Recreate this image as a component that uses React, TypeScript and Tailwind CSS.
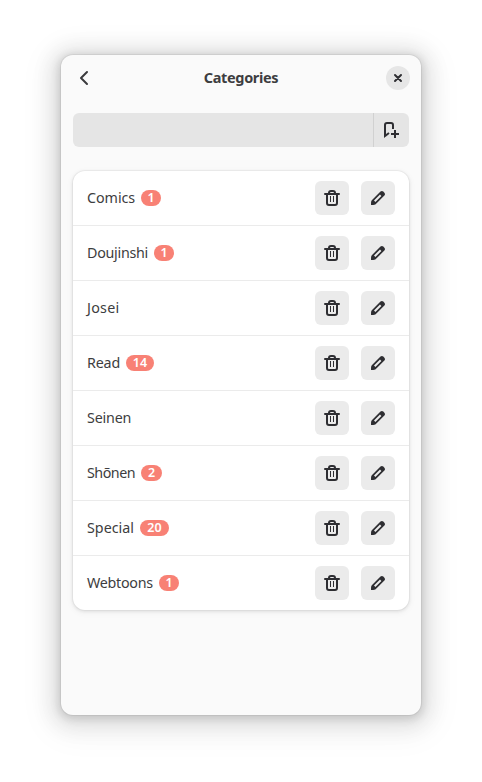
type Category = { name: string; count?: number; width: string; tracking: string };

const categories: Category[] = [
  { name: "Comics", count: 1, width: "w-12", tracking: "tracking-[-0.05px]" },
  { name: "Doujinshi", count: 1, width: "w-[61px]", tracking: "tracking-[-0.28px]" },
  { name: "Josei", width: "w-[33px]", tracking: "tracking-[0.25px]" },
  { name: "Read", count: 14, width: "w-[33px]", tracking: "tracking-[-0.2px]" },
  { name: "Seinen", width: "w-[45px]", tracking: "tracking-[-0.2px]" },
  { name: "Shõnen", count: 2, width: "w-12", tracking: "tracking-[-0.5px]" },
  { name: "Special", count: 20, width: "w-[47px]", tracking: "tracking-[0px]" },
  { name: "Webtoons", count: 1, width: "w-[66px]", tracking: "tracking-[-0.28px]" },
];

function BackIcon() {
  return (
    <svg width="16" height="16" viewBox="0 0 16 16" fill="none" stroke="#3a3a3d" strokeWidth="2" strokeLinecap="round" strokeLinejoin="round">
      <path d="M11 2 5 8l6 6" />
    </svg>
  );
}

function CloseIcon() {
  return (
    <svg width="16" height="16" viewBox="0 0 16 16" fill="none" stroke="#2f2f33" strokeWidth="2" strokeLinecap="round">
      <path d="m5 5 6 6M11 5l-6 6" />
    </svg>
  );
}

function BookmarkAddIcon() {
  return (
    <svg className="-ml-px" width="16" height="16" viewBox="0 0 16 16" fill="none" stroke="#2e2e32" strokeWidth="2">
      <path d="M6 11 2 14V3q0-2 2-2h4q2 0 2 2v4M12 8v8M8 12h8" />
    </svg>
  );
}

function TrashIcon() {
  return (
    <svg width="16" height="16" viewBox="0 0 16 16" fill="none" stroke="#2e2e32">
      <path d="M1 4h14M3 4v9q0 2 2 2h6q2 0 2-2V4M5 4V3q0-2 2-2h2q2 0 2 2v1" strokeWidth="2" strokeLinecap="round" />
      <path d="M6.5 6v6M9.5 6v6" />
    </svg>
  );
}

function PencilIcon() {
  return (
    <svg width="16" height="16" viewBox="0 0 16 16" fill="#2e2e32">
      <path fillRule="evenodd" d="M10.5 1.6 2 10.1C1.2 10.9 1 11.7 1 15c3.3 0 4.1-.2 4.9-1l8.5-8.5c.8-.8.8-2 0-2.8l-1.1-1.1c-.8-.8-2-.8-2.8 0ZM10 4.6 11.4 6l-6 6L4 10.6l6-6Z" />
    </svg>
  );
}

export default function App() {
  return (
    <div className="flex h-[782px] w-[482px] justify-center overflow-hidden bg-white pt-[55px] font-['Noto_Sans',sans-serif] text-[#3d3d40]">
      <main className="flex h-[660px] w-[360px] flex-col rounded-xl bg-[#fafafa] shadow-[0_2px_8px_2px_rgba(0,0,0,0.13),0_3px_20px_10px_rgba(0,0,0,0.09),0_6px_32px_16px_rgba(0,0,0,0.04),0_0_0_1px_rgba(0,0,0,0.05)]">
        <header className="flex h-[46px] items-center justify-between pr-[11px] pl-[15px]">
          <button className="flex w-6 items-center" aria-label="Back"><BackIcon /></button>
          <h1 className="-ml-1 flex w-[74px] justify-center text-[14.5px] font-bold tracking-[-0.36px] whitespace-nowrap">Categories</h1>
          <button className="flex size-6 items-center justify-center rounded-full bg-[#e6e6e6]" aria-label="Close"><CloseIcon /></button>
        </header>
        <div className="mx-3 mt-3 flex h-[34px] shrink-0 overflow-hidden rounded-md bg-[#e5e5e5]">
          <input className="min-w-0 flex-1 outline-none" aria-label="Category name" />
          <button className="flex w-9 items-center justify-center border-l border-[#d1d1d1]" aria-label="Add category"><BookmarkAddIcon /></button>
        </div>
        <ul className="mx-3 mt-6 rounded-xl bg-white shadow-[0_0_0_1px_rgba(0,0,0,0.03),0_1px_3px_1px_rgba(0,0,0,0.07),0_2px_6px_2px_rgba(0,0,0,0.03)]">
          {categories.map((category) => (
            <li key={category.name} className="flex h-[55px] items-center border-b border-[#ebebeb] px-3.5 last:h-[54px] last:border-b-0">
              <span className={`${category.width} ${category.tracking} text-[14.3px] whitespace-nowrap`}>{category.name}</span>
              {category.count !== undefined && (
                <span className={`ml-1.5 flex h-4 items-center justify-center rounded-full bg-[#f88175] pt-px text-[12.5px] font-semibold text-white ${category.count === 20 ? "w-[29px]" : category.count > 9 ? "w-7" : category.count === 2 ? "w-[21px]" : "w-5"}`}>
                  {category.count}
                </span>
              )}
              <div className="ml-auto flex gap-3">
                <button className="flex size-[34px] items-center justify-center rounded-md bg-[#ebebeb]" aria-label="Delete category"><TrashIcon /></button>
                <button className="flex size-[34px] items-center justify-center rounded-md bg-[#ebebeb]" aria-label="Rename category"><PencilIcon /></button>
              </div>
            </li>
          ))}
        </ul>
      </main>
    </div>
  );
}
